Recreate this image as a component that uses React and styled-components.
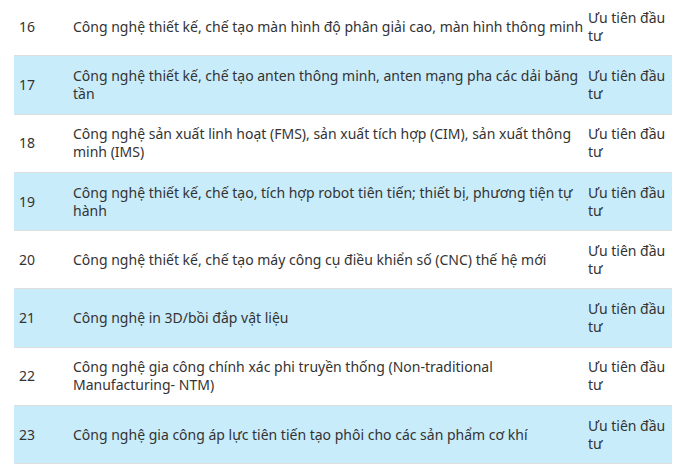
import React from "react"
import styled, { createGlobalStyle } from "styled-components"

const GlobalStyle = createGlobalStyle`
  html, body {
    margin: 0;
    padding: 0;
    background: #ffffff;
    overflow: hidden;
  }
`

const Page = styled.div`
  width: 685px;
  height: 468px;
  overflow: hidden;
  font-family: "Noto Sans", "Open Sans", sans-serif;
  font-size: 14px;
  color: #333333;
`

const Table = styled.div`
  margin: -2px 13px 0 14px;
  display: flex;
  flex-direction: column;
`

const Row = styled.div`
  display: grid;
  grid-template-columns: 54px 517px 87px;
  align-items: center;
  background: ${props => (props.$shaded ? "#c9ecfb" : "#ffffff")};
  border-bottom: 1px solid #dedede;
  box-sizing: border-box;
  height: 58.3px;
`

const NumCell = styled.div`
  padding: 0 5px;
  line-height: 18px;
`

const TextCell = styled.div`
  padding: 0 0 0 5px;
  line-height: 18px;
`

const StatusCell = styled.div`
  padding: 0 0 0 3px;
  line-height: 18px;
`

const rows = [
  ["16", "Công nghệ thiết kế, chế tạo màn hình độ phân giải cao, màn hình thông minh"],
  ["17", "Công nghệ thiết kế, chế tạo anten thông minh, anten mạng pha các dải băng tần"],
  ["18", "Công nghệ sản xuất linh hoạt (FMS), sản xuất tích hợp (CIM), sản xuất thông minh (IMS)"],
  ["19", "Công nghệ thiết kế, chế tạo, tích hợp robot tiên tiến; thiết bị, phương tiện tự hành"],
  ["20", "Công nghệ thiết kế, chế tạo máy công cụ điều khiển số (CNC) thế hệ mới"],
  ["21", "Công nghệ in 3D/bồi đắp vật liệu"],
  ["22", "Công nghệ gia công chính xác phi truyền thống (Non-traditional Manufacturing- NTM)"],
  ["23", "Công nghệ gia công áp lực tiên tiến tạo phôi cho các sản phẩm cơ khí"],
]

const App = () => (
  <Page>
    <GlobalStyle />
    <Table>
      {rows.map(([num, text], i) => (
        <Row key={num} $shaded={i % 2 === 1}>
          <NumCell>{num}</NumCell>
          <TextCell>{text}</TextCell>
          <StatusCell>Ưu tiên đầu tư</StatusCell>
        </Row>
      ))}
    </Table>
  </Page>
)

export default App
